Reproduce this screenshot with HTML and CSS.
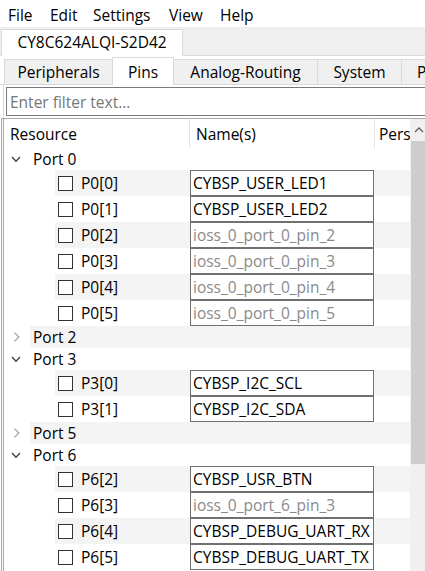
FILE: index.html
```html
<!DOCTYPE html>
<html>
<head>
<meta charset="utf-8">
<link rel="stylesheet" href="styles.css">
</head>
<body>
<div class="menubar">
  <span class="menu-item">File</span>
  <span class="menu-item">Edit</span>
  <span class="menu-item">Settings</span>
  <span class="menu-item">View</span>
  <span class="menu-item">Help</span>
</div>
<div class="doc-tabs">
  <div class="doc-tab">CY8C624ALQI-S2D42</div>
</div>
<div class="view-tabs">
  <div class="view-tab tab-peripherals">Peripherals</div>
  <div class="view-tab tab-pins active">Pins</div>
  <div class="view-tab tab-analog">Analog-Routing</div>
  <div class="view-tab tab-system">System</div>
  <div class="view-tab tab-clocks">Peripheral-Clocks</div>
</div>
<div class="pane">
  <input class="filter" type="text" placeholder="Enter filter text...">
  <div class="tree">
    <div class="tree-main">
      <div class="tree-header">
        <div class="hcell">Resource</div>
        <div class="hcell">Name(s)</div>
        <div class="hcell last">Persisted</div>
      </div>
      <div class="tree-body">
        <div class="row port"><div class="indent"><svg class="chev" width="10" height="10" viewBox="0 0 10 10"><polyline points="1,3 5,7.3 9,3" fill="none" stroke="#404040" stroke-width="1.3"/></svg></div><div class="band">Port 0</div></div>
        <div class="row pin"><div class="indent"></div><div class="band"><div class="res"><span class="check"></span><span>P0[0]</span></div><div class="name">CYBSP_USER_LED1</div></div></div>
        <div class="row pin"><div class="indent"></div><div class="band"><div class="res"><span class="check"></span><span>P0[1]</span></div><div class="name">CYBSP_USER_LED2</div></div></div>
        <div class="row pin"><div class="indent"></div><div class="band"><div class="res"><span class="check"></span><span>P0[2]</span></div><div class="name default">ioss_0_port_0_pin_2</div></div></div>
        <div class="row pin"><div class="indent"></div><div class="band"><div class="res"><span class="check"></span><span>P0[3]</span></div><div class="name default">ioss_0_port_0_pin_3</div></div></div>
        <div class="row pin"><div class="indent"></div><div class="band"><div class="res"><span class="check"></span><span>P0[4]</span></div><div class="name default">ioss_0_port_0_pin_4</div></div></div>
        <div class="row pin"><div class="indent"></div><div class="band"><div class="res"><span class="check"></span><span>P0[5]</span></div><div class="name default">ioss_0_port_0_pin_5</div></div></div>
        <div class="row port"><div class="indent"><svg class="chev" width="10" height="10" viewBox="0 0 10 10"><polyline points="3.5,0.6 7.8,5 3.5,9.4" fill="none" stroke="#a6a6a6" stroke-width="1.3"/></svg></div><div class="band">Port 2</div></div>
        <div class="row port"><div class="indent"><svg class="chev" width="10" height="10" viewBox="0 0 10 10"><polyline points="1,3 5,7.3 9,3" fill="none" stroke="#404040" stroke-width="1.3"/></svg></div><div class="band">Port 3</div></div>
        <div class="row pin"><div class="indent"></div><div class="band"><div class="res"><span class="check"></span><span>P3[0]</span></div><div class="name">CYBSP_I2C_SCL</div></div></div>
        <div class="row pin"><div class="indent"></div><div class="band"><div class="res"><span class="check"></span><span>P3[1]</span></div><div class="name">CYBSP_I2C_SDA</div></div></div>
        <div class="row port"><div class="indent"><svg class="chev" width="10" height="10" viewBox="0 0 10 10"><polyline points="3.5,0.6 7.8,5 3.5,9.4" fill="none" stroke="#a6a6a6" stroke-width="1.3"/></svg></div><div class="band">Port 5</div></div>
        <div class="row port"><div class="indent"><svg class="chev" width="10" height="10" viewBox="0 0 10 10"><polyline points="1,3 5,7.3 9,3" fill="none" stroke="#404040" stroke-width="1.3"/></svg></div><div class="band">Port 6</div></div>
        <div class="row pin"><div class="indent"></div><div class="band"><div class="res"><span class="check"></span><span>P6[2]</span></div><div class="name">CYBSP_USR_BTN</div></div></div>
        <div class="row pin"><div class="indent"></div><div class="band"><div class="res"><span class="check"></span><span>P6[3]</span></div><div class="name default">ioss_0_port_6_pin_3</div></div></div>
        <div class="row pin"><div class="indent"></div><div class="band"><div class="res"><span class="check"></span><span>P6[4]</span></div><div class="name">CYBSP_DEBUG_UART_RX</div></div></div>
        <div class="row pin"><div class="indent"></div><div class="band"><div class="res"><span class="check"></span><span>P6[5]</span></div><div class="name">CYBSP_DEBUG_UART_TX</div></div></div>
      </div>
    </div>
    <div class="vscroll">
      <div class="scroll-btn"><svg width="10" height="6" viewBox="0 0 10 6"><polyline points="1,5 5,1 9,5" fill="none" stroke="#606060" stroke-width="1.3"/></svg></div>
      <div class="thumb"></div>
    </div>
  </div>
</div>
</body>
</html>
```
FILE: styles.css
```css
* { box-sizing: border-box; }
html, body { margin: 0; padding: 0; }
body {
  width: 425px;
  height: 571px;
  overflow: hidden;
  background: #fff;
  font-family: "Open Sans", "Noto Sans", sans-serif;
  font-size: 15.5px;
  color: #000;
  white-space: nowrap;
}

/* menu bar */
.menubar {
  height: 27px;
  display: grid;
  grid-template-columns: 42px 43px 76px 51px auto;
  align-items: center;
  padding: 3px 0 0 8px;
  line-height: 20px;
}

/* document tabs */
.doc-tabs {
  height: 29px;
  display: flex;
  align-items: flex-end;
  padding-left: 1px;
  background: #f0f0f0;
  border-bottom: 1px solid #d9d9d9;
}
.doc-tab {
  width: 182px;
  height: 27px;
  margin-bottom: -1px;
  background: #fff;
  border: 1px solid #d9d9d9;
  border-bottom: none;
  text-align: center;
  line-height: 25px;
}

/* view tabs */
.view-tabs {
  height: 29px;
  display: flex;
  align-items: flex-end;
  padding-left: 4px;
  border-bottom: 1px solid #d9d9d9;
}
.view-tab {
  height: 25px;
  background: #f0f0f0;
  border: 1px solid #d9d9d9;
  border-bottom: none;
  margin-left: -1px;
  text-align: center;
  line-height: 25px;
  flex: none;
}
.view-tab:first-child { margin-left: 0; }
.view-tab.active {
  height: 28px;
  margin-bottom: -1px;
  background: #fff;
  position: relative;
  line-height: 28px;
}
.tab-peripherals { width: 109px; }
.tab-pins { width: 62px; }
.tab-analog { width: 145px; }
.tab-system { width: 85px; }
.tab-clocks { width: 140px; text-align: left; padding-left: 15px; }

/* pane */
.pane {
  margin-left: 3px;
  border-left: 1px solid #d9d9d9;
  padding-top: 2px;
  height: 486px;
}
.filter {
  display: block;
  margin: 0 0 2px 2px;
  width: 440px;
  height: 29px;
  border: 1px solid #7a7a7a;
  padding: 0 3px;
  font-family: inherit;
  font-size: 15.5px;
  color: #000;
  outline: none;
}
.filter::placeholder { color: #767676; }

/* tree */
.tree {
  margin-left: -3px;
  border-left: 3px double #a8a8a8;
  border-top: 1px solid #a8a8a8;
  display: flex;
  height: 460px;
}
.tree-main {
  width: 406px;
  flex: none;
  overflow: hidden;
}
.tree-header {
  height: 29px;
  display: grid;
  grid-template-columns: 186px 185px 1fr;
}
.hcell {
  border-right: 1px solid #e5e5e5;
  padding: 2px 0 0 6px;
  line-height: 27px;
  overflow: hidden;
}
.hcell.last { border-right: none; padding-left: 4px; }

.row { display: flex; }
.row.port { height: 22px; }
.row.pin { height: 26px; }
.row .indent { flex: none; display: flex; align-items: center; }
.row.port .indent { width: 26px; padding-left: 7px; }
.row.pin .indent { width: 51px; }
.band {
  flex: 1;
  display: flex;
  align-items: center;
  line-height: 22px;
}
.row.port .band { padding-left: 3px; }
.tree-body > .row:nth-child(even) .band { background: #f4f4f4; }

.res {
  width: 135px;
  flex: none;
  display: flex;
  align-items: center;
  padding-left: 3px;
}
.check {
  width: 15px;
  height: 15px;
  border: 1px solid #333;
  background: #fff;
  margin-right: 8px;
  flex: none;
}
.name {
  width: 184px;
  height: 26px;
  flex: none;
  border: 1px solid #707070;
  background: #fff;
  padding-left: 2px;
  line-height: 24px;
  overflow: hidden;
}
.name.default { color: #8a8a8a; }

/* scrollbar */
.vscroll {
  width: 17px;
  flex: none;
  background: #f0f0f0;
  display: flex;
  flex-direction: column;
}
.scroll-btn {
  height: 22px;
  padding: 8px 0 0 4px;
}
.scroll-btn svg { display: block; }
.thumb {
  height: 323px;
  margin-left: 1px;
  background: #cdcdcd;
}
```
